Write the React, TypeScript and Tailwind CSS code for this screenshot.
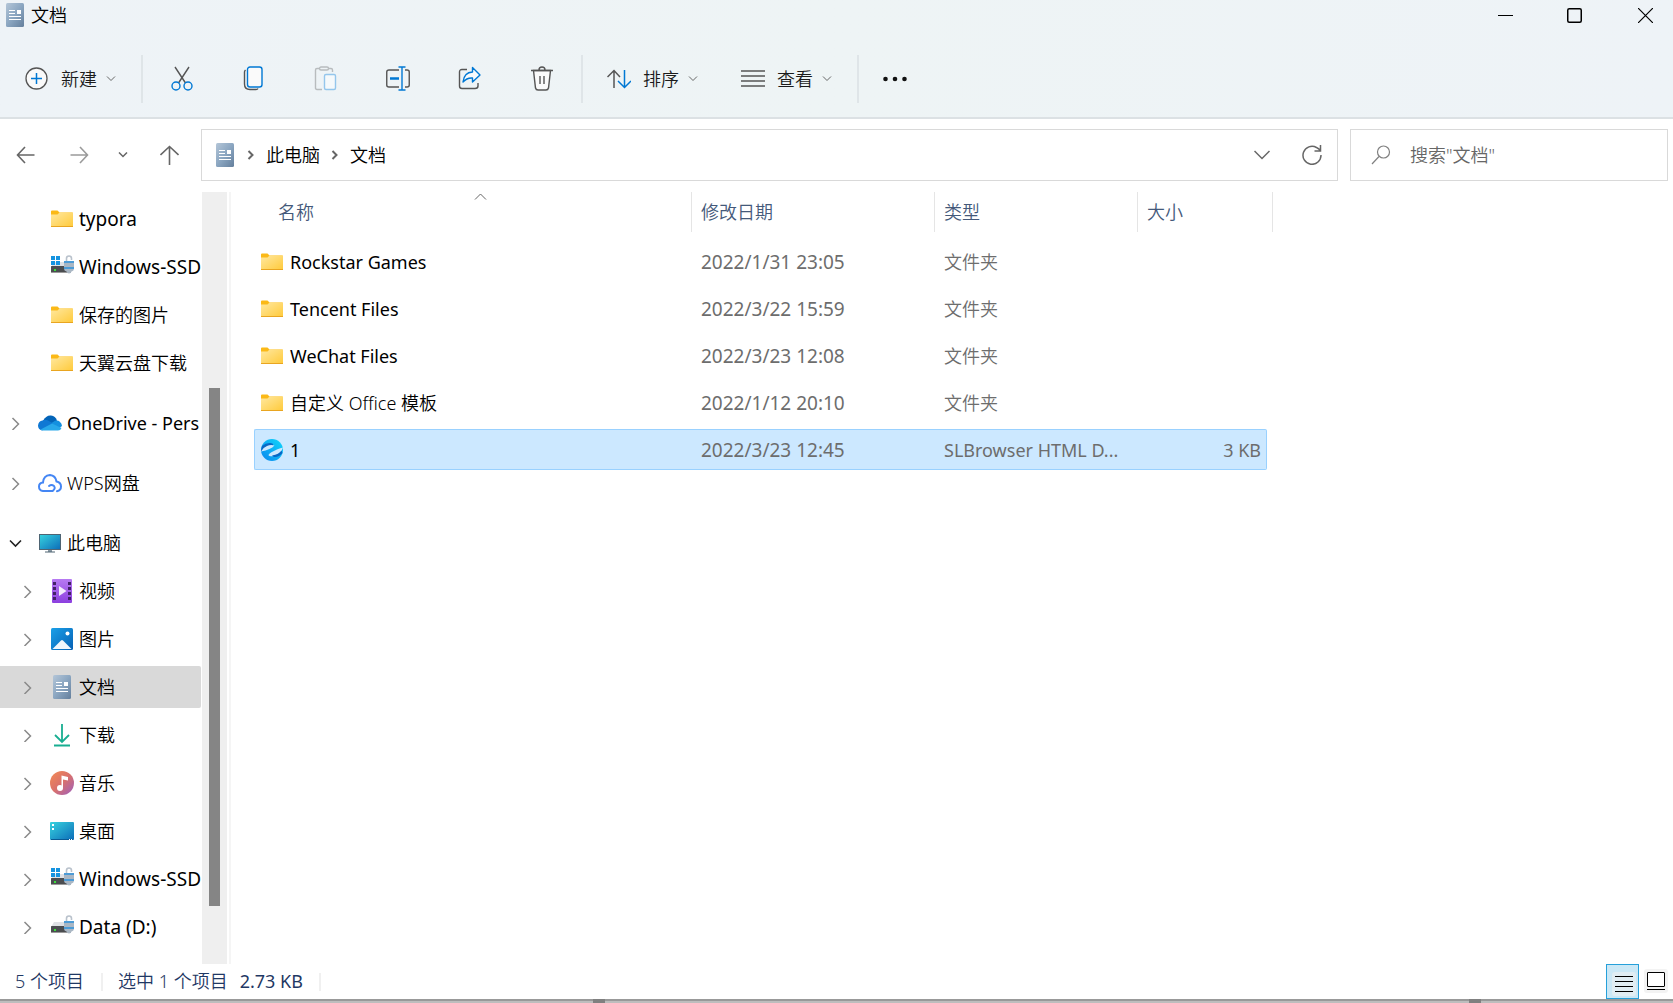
import type { ReactNode } from "react";

type NavItem = {
  label: string;
  icon: ReactNode;
  level: 1 | 2;
  expand?: "open" | "closed";
  active?: boolean;
  latin?: boolean;
};

type FileRow = {
  name: string;
  date: string;
  type: string;
  size?: string;
  icon: ReactNode;
  selected?: boolean;
};

const FolderIcon = () => (
  <svg width="22" height="18" viewBox="0 0 22 18">
    <defs>
      <linearGradient id="folder" x1="0" y1="0" x2="1" y2="1">
        <stop offset="0" stopColor="#ffe8a0" />
        <stop offset="1" stopColor="#ffca3a" />
      </linearGradient>
    </defs>
    <path d="M0 1.5Q0 .5 1 .5H6.5L8.5 2.5H21.5V6H0Z" fill="#fbb917" />
    <path d="M0 4.5H6.5L8.5 2.5H22V17H0Z" fill="url(#folder)" />
    <path d="M0 16.5H22" stroke="#e9a520" />
  </svg>
);

const DocumentIcon = () => (
  <svg width="18" height="24" viewBox="0 0 18 24">
    <defs>
      <linearGradient id="doc" x1="0" y1="0" x2="1" y2="1">
        <stop offset="0" stopColor="#b4c6d8" />
        <stop offset=".5" stopColor="#8ba6c1" />
        <stop offset="1" stopColor="#647f9c" />
      </linearGradient>
    </defs>
    <rect width="18" height="24" rx="1.5" fill="url(#doc)" />
    <path d="M3 7.5H9M3 10.5H9M3 13.5H15M3 16.5H15" stroke="#fff" />
    <rect x="11" y="7" width="4" height="4" fill="#fff" />
  </svg>
);

const DriveIcon = ({ windows = false }: { windows?: boolean }) => (
  <svg width="24" height="24" viewBox="0 0 24 24">
    <path d="M4 7H20L22 12H1Z" fill="#dfe1e5" />
    <rect x="1" y="11" width="20" height="7" rx=".5" fill="#4b4d50" />
    <path d="M1 17.5H21" stroke="#999" />
    <rect x="4" y="14" width="2" height="2" fill="#3be03b" />
    {windows && (
      <path d="M1 1H5V5H1ZM6 1H10V5H6ZM1 6H5V10H1ZM6 6H10V10H6Z" fill="#1593e0" />
    )}
    <path d="M16.5 7V3.5Q16.5 1 19 1Q21.5 1 21.5 3.5V5" fill="none" stroke="#b9c2cc" strokeWidth="1.6" />
    <path d="M14 6H24V13Q24 16 21.5 16.5Q21 18.5 19 18.5Q17 18.5 16.5 16.5Q14 16 14 13Z" fill="#aab7c4" />
    <path d="M14 7H24M14 13H24" stroke="#2e93dc" strokeWidth="1.5" />
  </svg>
);

const OneDriveIcon = () => (
  <svg width="24" height="16" viewBox="0 0 24 16">
    <path d="M5 6Q8 0 13 .5Q17.5 1 19 5.5L13 10Z" fill="#0364b8" />
    <path d="M4.5 5.5Q7 4 10 5.5L17 9.5L4 15.5Q0 14.5 0 10.5Q.5 6 4.5 5.5Z" fill="#0f78d4" />
    <path d="M13.5 8L17 5.8Q20 5 21.8 6.8Q24 8.5 24 11L20 14Z" fill="#1490df" />
    <path d="M2.5 14.5L14 8.5L23.5 13Q22.5 15.5 20 15.5H5Q3.5 15.5 2.5 14.5Z" fill="#28a8ea" />
  </svg>
);

const WpsIcon = () => (
  <svg width="24" height="19" viewBox="0 0 24 19" fill="none" stroke="#4486f4" strokeWidth="2" strokeLinecap="round">
    <path d="M14.5 17H5Q1 16.5 1 12.5Q1 9 5 8.5Q5.5 1.5 12 1Q17.5 1.5 18.5 7.5Q23 8.5 23 12.5Q23 16.5 19 17.3" />
    <path d="M11 12Q13.5 10 16 12Q18 14.5 14.5 17" />
  </svg>
);

const ComputerIcon = () => (
  <svg width="24" height="20" viewBox="0 0 24 20">
    <defs>
      <linearGradient id="pc" x1="0" y1="0" x2="1" y2="1">
        <stop offset="0" stopColor="#37d3df" />
        <stop offset="1" stopColor="#0c6cb8" />
      </linearGradient>
    </defs>
    <rect x="1.5" y="1.5" width="21" height="15" fill="url(#pc)" stroke="#4e6473" />
    <path d="M10 17H14V19H10Z" fill="#8595a1" />
    <path d="M7 19H17" stroke="#4e6473" />
  </svg>
);

const VideoIcon = () => (
  <svg width="20" height="24" viewBox="0 0 20 24">
    <defs>
      <linearGradient id="video" x1="0" y1="0" x2="0" y2="1">
        <stop offset="0" stopColor="#b77af2" />
        <stop offset="1" stopColor="#8c3fdf" />
      </linearGradient>
    </defs>
    <rect width="20" height="24" rx="1" fill="url(#video)" />
    <path d="M2.5 3V22M17.5 3V22" stroke="#432168" strokeWidth="3" strokeDasharray="3 2" />
    <path d="M7 7L14.5 12L7 17Z" fill="#f2ebfb" />
  </svg>
);

const PictureIcon = () => (
  <svg width="22" height="22" viewBox="0 0 22 22">
    <defs>
      <linearGradient id="picture" x1="0" y1="0" x2="1" y2="1">
        <stop offset="0" stopColor="#1ba0e8" />
        <stop offset="1" stopColor="#0560b4" />
      </linearGradient>
    </defs>
    <rect width="22" height="22" rx="1.5" fill="url(#picture)" />
    <path d="M1.5 21L10 12.5Q11 11.5 12 12.5L20.5 21Z" fill="#eff6fc" />
    <circle cx="16.5" cy="5.5" r="2" fill="#fff" />
  </svg>
);

const DownloadIcon = () => (
  <svg width="18" height="24" viewBox="0 0 18 24" fill="none" stroke="#18ae91" strokeWidth="1.8">
    <path d="M9 1V19M2 12L9 19L16 12M1 22.5H17" />
  </svg>
);

const MusicIcon = () => (
  <svg width="24" height="24" viewBox="0 0 24 24">
    <defs>
      <linearGradient id="music" x1="0" y1="0" x2="1" y2="1">
        <stop offset="0" stopColor="#f48b54" />
        <stop offset=".5" stopColor="#d9716c" />
        <stop offset="1" stopColor="#9c5fc0" />
      </linearGradient>
    </defs>
    <circle cx="12" cy="12" r="12" fill="url(#music)" />
    <path d="M11.5 4.5L18 6V9.5L13 8.5V17H11.5Z" fill="#fff" />
    <circle cx="10" cy="17" r="3" fill="#fff" />
  </svg>
);

const DesktopIcon = () => (
  <svg width="24" height="18" viewBox="0 0 24 18">
    <rect width="24" height="18" rx="1" fill="url(#pc)" />
    <path d="M2 3H4M2 7H4" stroke="#fff" strokeWidth="2" />
    <path d="M1 17.5H23" stroke="#0b5a94" />
    <path d="M19 17.5H20M21 17.5H22" stroke="#fff" />
  </svg>
);

const BrowserIcon = () => (
  <svg width="22" height="22" viewBox="0 0 22 22">
    <defs>
      <linearGradient id="browser" x1="1" y1="0" x2="0" y2="1">
        <stop offset="0" stopColor="#10d8fb" />
        <stop offset="1" stopColor="#0a86ee" />
      </linearGradient>
    </defs>
    <circle cx="11" cy="11" r="11" fill="url(#browser)" />
    <path d="M1 7Q5 3.5 9.5 4Q14 4.5 11 7.5Q8 10 0 12Z" fill="#0768c6" />
    <path d="M0 12.5Q2 8.5 6 7Q9.5 5.5 13.5 6.5Q10 10.5 0 12.5ZM22 8.5Q17 9.5 10 13.5Q6 16 8.5 17Q13 18 17.5 15Q21 12.5 22 8.5Z" fill="#cce8ff" />
    <path d="M11 16.5Q18 15.5 20.5 11.5L21.5 14Q18 18.5 13 18Z" fill="#0768c6" />
  </svg>
);

const Chevron = ({ className }: { className: string }) => (
  <svg width="10" height="6" viewBox="0 0 10 6" fill="none" stroke="currentColor" className={className}>
    <path d="M1 .5L5 4.5L9 .5" />
  </svg>
);

const Expander = ({ open }: { open: boolean }) =>
  open ? (
    <svg width="14" height="14" viewBox="0 0 14 14" fill="none" stroke="#222" strokeWidth="1.6">
      <path d="M1 4.5L6.5 10L12 4.5" />
    </svg>
  ) : (
    <svg width="14" height="14" viewBox="0 0 14 14" fill="none" stroke="#8a8a8a" strokeWidth="1.5">
      <path d="M3.5 2L9.5 8L3.5 14" />
    </svg>
  );

const Crumb = () => (
  <svg width="8" height="10" viewBox="0 0 8 10" fill="none" stroke="#666" strokeWidth="2">
    <path d="M1.5 1L5.5 5L1.5 9" />
  </svg>
);

const tools = [
  {
    label: "剪切",
    icon: (
      <>
        <path d="M5 1L15.5 17M19 1L8.5 17" stroke="#555" />
        <circle cx="6" cy="20" r="4" stroke="#0078d4" />
        <circle cx="18" cy="20" r="4" stroke="#0078d4" />
      </>
    ),
  },
  {
    label: "复制",
    icon: (
      <>
        <path d="M3.5 4Q2.5 5 2.5 6V18Q2.5 23.5 8 23.5H14Q15.5 23.5 16 22.5" stroke="#555" />
        <rect x="5.5" y="1" width="14.5" height="20" rx="2.5" fill="#fafafa" stroke="#0078d4" />
      </>
    ),
  },
  {
    label: "粘贴",
    disabled: true,
    icon: (
      <>
        <path d="M8 23.5H3Q1.5 23.5 1.5 22V4Q1.5 2.5 3 2.5H5M14 2.5H17Q18.5 2.5 18.5 4V6" stroke="#b8bcbe" />
        <rect x="5.5" y="1" width="9" height="3" rx="1.5" stroke="#b8bcbe" />
        <rect x="10.5" y="8.5" width="11" height="15" rx="1.5" fill="#f5f9fb" stroke="#94c6ec" />
      </>
    ),
  },
  {
    label: "重命名",
    icon: (
      <>
        <path d="M13 4H3Q.75 4 .75 6V19Q.75 21 3 21H13M19 4H21Q23.25 4 23.25 6V19Q23.25 21 21 21H19" stroke="#555" />
        <path d="M4 12.5H13" stroke="#0078d4" strokeWidth="2.5" />
        <path d="M12.5 1H19.5M12.5 24H19.5M16 1V24" stroke="#0078d4" />
      </>
    ),
  },
  {
    label: "共享",
    icon: (
      <>
        <path d="M9 3.5H4Q1.5 3.5 1.5 6V20Q1.5 22.5 4 22.5H17Q20 22.5 20 20V17" stroke="#555" />
        <path d="M14.5 1.5L22 9L14.5 16V12Q9 11.5 5 16Q6 6.5 14.5 6Z" fill="#f7fafc" stroke="#0078d4" strokeLinejoin="round" />
      </>
    ),
  },
  {
    label: "删除",
    icon: (
      <>
        <path d="M3.5 4.5L5.5 22Q6 24 8 24H16Q18 24 18.5 22L20.5 4.5Z" fill="#fafafa" stroke="#555" />
        <path d="M1 4.5H23M9 4Q9 1 12 1Q15 1 15 4M10 10V18M14 10V18" stroke="#555" />
      </>
    ),
  },
];

const quickAccess: NavItem[] = [
  { label: "typora", icon: <FolderIcon />, level: 2, latin: true },
  { label: "Windows-SSD", icon: <DriveIcon windows />, level: 2, latin: true },
  { label: "保存的图片", icon: <FolderIcon />, level: 2 },
  { label: "天翼云盘下载", icon: <FolderIcon />, level: 2 },
];

const computer: NavItem[] = [
  { label: "此电脑", icon: <ComputerIcon />, level: 1, expand: "open" },
  { label: "视频", icon: <VideoIcon />, level: 2, expand: "closed" },
  { label: "图片", icon: <PictureIcon />, level: 2, expand: "closed" },
  { label: "文档", icon: <DocumentIcon />, level: 2, expand: "closed", active: true },
  { label: "下载", icon: <DownloadIcon />, level: 2, expand: "closed" },
  { label: "音乐", icon: <MusicIcon />, level: 2, expand: "closed" },
  { label: "桌面", icon: <DesktopIcon />, level: 2, expand: "closed" },
  { label: "Windows-SSD", icon: <DriveIcon windows />, level: 2, expand: "closed", latin: true },
  { label: "Data (D:)", icon: <DriveIcon />, level: 2, expand: "closed", latin: true },
];

const navGroups: NavItem[][] = [
  quickAccess,
  [{ label: "OneDrive - Pers", icon: <OneDriveIcon />, level: 1, expand: "closed" }],
  [{ label: "WPS网盘", icon: <WpsIcon />, level: 1, expand: "closed" }],
  computer,
];

const files: FileRow[] = [
  { name: "Rockstar Games", date: "2022/1/31 23:05", type: "文件夹", icon: <FolderIcon /> },
  { name: "Tencent Files", date: "2022/3/22 15:59", type: "文件夹", icon: <FolderIcon /> },
  { name: "WeChat Files", date: "2022/3/23 12:08", type: "文件夹", icon: <FolderIcon /> },
  { name: "自定义 Office 模板", date: "2022/1/12 20:10", type: "文件夹", icon: <FolderIcon /> },
  { name: "1", date: "2022/3/23 12:45", type: "SLBrowser HTML D...", size: "3 KB", icon: <BrowserIcon />, selected: true },
];

// Latin text is set a step heavier than Chinese so both read evenly
const weightFor = (text: string) => (/[^\x20-\x7e]/.test(text) ? "font-[350]" : "font-normal");

const Divider = () => <div className="h-12 w-0.5 bg-[#dfe5e8]" />;

const TitleBar = () => (
  <div className="flex h-[30px] items-center justify-between pl-1.5">
    <div className="flex items-center gap-[7px] text-black">
      <DocumentIcon />
      <h1 className="font-[350]">文档</h1>
    </div>
    <div className="flex h-full">
      <button aria-label="最小化" className="flex w-[69px] items-center justify-center">
        <svg width="15" height="15" viewBox="0 0 15 15" stroke="#000"><path d="M0 7.5H15" /></svg>
      </button>
      <button aria-label="最大化" className="flex w-[69px] items-center justify-center">
        <svg width="15" height="15" viewBox="0 0 15 15" fill="none" stroke="#000" strokeWidth="1.5">
          <rect x=".75" y=".75" width="13.5" height="13.5" rx="1.5" />
        </svg>
      </button>
      <button aria-label="关闭" className="flex w-16 items-center justify-center pl-2">
        <svg width="15" height="15" viewBox="0 0 15 15" stroke="#000" strokeWidth="1.2"><path d="M0 0L15 15M15 0L0 15" /></svg>
      </button>
    </div>
  </div>
);

const Toolbar = () => (
  <div className="flex h-[87px] items-center pt-2.5 text-[#1b1b1b]">
    <button className="flex items-center pr-[25px] pl-[25px]">
      <svg width="23" height="23" viewBox="0 0 23 23" fill="none" strokeWidth="1.3">
        <circle cx="11.5" cy="11.5" r="10.5" fill="#fafafa" stroke="#555" />
        <path d="M6 11.5H17M11.5 6V17" stroke="#0078d4" strokeWidth="1.5" />
      </svg>
      <span className="mr-[9px] ml-[13px]">新建</span>
      <Chevron className="text-[#666]" />
    </button>
    <Divider />
    <div className="flex px-[3px]">
      {tools.map((tool) => (
        <button key={tool.label} aria-label={tool.label} disabled={tool.disabled} className="flex h-12 w-[72px] items-center justify-center">
          <svg width="24" height="25" viewBox="0 0 24 25" fill="none" strokeWidth="1.4">{tool.icon}</svg>
        </button>
      ))}
    </div>
    <Divider />
    <button className="flex items-center pl-6">
      <svg width="24" height="20" viewBox="0 0 24 20" fill="none" strokeWidth="1.5">
        <path d="M7 19V1.5M.5 8L7 1.5L13 8" stroke="#555" />
        <path d="M17.5 1V18.5M11 12L17.5 18.5L24 12" stroke="#0078d4" />
      </svg>
      <span className="mr-[9px] ml-3">排序</span>
      <Chevron className="text-[#666]" />
    </button>
    <button className="flex items-center pr-[25px] pl-[43px]">
      <svg width="24" height="17" viewBox="0 0 24 17" stroke="#555" strokeWidth="1.3">
        <path d="M0 1H24M0 6H24M0 11H24M0 16H24" />
      </svg>
      <span className="mr-[9px] ml-3">查看</span>
      <Chevron className="text-[#666]" />
    </button>
    <Divider />
    <button aria-label="更多" className="flex items-center pl-6">
      <svg width="24" height="6" viewBox="0 0 24 6" fill="#111">
        <circle cx="2.5" cy="3" r="2.3" />
        <circle cx="12" cy="3" r="2.3" />
        <circle cx="21.5" cy="3" r="2.3" />
      </svg>
    </button>
  </div>
);

const AddressBar = () => (
  <div className="flex h-[73px] items-center pr-[5px] pb-0.5">
    <nav className="flex w-[201px] items-center pl-4 text-[#666]">
      <button aria-label="后退">
        <svg width="19" height="18" viewBox="0 0 19 18" fill="none" stroke="currentColor" strokeWidth="1.6"><path d="M18.5 9H1.5M9 1L1.5 9L9 17" /></svg>
      </button>
      <button aria-label="前进" className="ml-[35px] text-[#9a9a9a]">
        <svg width="19" height="18" viewBox="0 0 19 18" fill="none" stroke="currentColor" strokeWidth="1.6"><path d="M.5 9H17.5M10 1L17.5 9L10 17" /></svg>
      </button>
      <button aria-label="最近位置" className="ml-[29px]"><Chevron className="stroke-[1.5]" /></button>
      <button aria-label="上移" className="ml-8">
        <svg width="19" height="20" viewBox="0 0 19 20" fill="none" stroke="currentColor" strokeWidth="1.6"><path d="M9.5 20V1.5M.5 10L9.5 1.5L18.5 10" /></svg>
      </button>
    </nav>
    <div className="flex h-[52px] flex-1 items-center border border-[#d9d9d9] pr-[15px] pl-3.5 text-black">
      <DocumentIcon />
      <div className="flex flex-1 items-center gap-[11px] pl-[13px]">
        <Crumb />
        <a href="#computer">此电脑</a>
        <Crumb />
        <a href="#documents">文档</a>
      </div>
      <button aria-label="历史记录" className="text-[#666]">
        <svg width="16" height="10" viewBox="0 0 16 10" fill="none" stroke="currentColor" strokeWidth="1.5"><path d="M.5 1L8 8.5L15.5 1" /></svg>
      </button>
      <button aria-label="刷新" className="ml-8">
        <svg width="20" height="20" viewBox="0 0 20 20" fill="none" stroke="#666" strokeWidth="1.5">
          <path d="M14.5 2.5A9 9 0 1 0 19 10M18.5 0V6H12.5M18.5 6Q17 3.5 14.5 2.5" />
        </svg>
      </button>
    </div>
    <label className="ml-3 flex h-[52px] w-[318px] items-center border border-[#d9d9d9] pl-5">
      <svg width="20" height="20" viewBox="0 0 20 20" fill="none" stroke="#808080" strokeWidth="1.2">
        <circle cx="12.5" cy="7" r="6" />
        <path d="M8 11.5L1 19" />
      </svg>
      <input aria-label="搜索" placeholder='搜索"文档"' className="ml-[19px] min-w-0 flex-1 outline-none placeholder:text-[#666]" />
    </label>
  </div>
);

const NavRow = ({ item }: { item: NavItem }) => (
  <a
    href="#nav"
    className={`flex h-[42px] items-center rounded-r-xs whitespace-nowrap text-black ${item.level === 1 ? "pl-[9px]" : "pl-[21px]"} ${item.active ? "bg-[#d9d9d9]" : ""} ${item.latin ? "text-[19px]" : ""} ${weightFor(item.label)}`}
  >
    <span className="mr-[15px] w-3.5 shrink-0">{item.expand && <Expander open={item.expand === "open"} />}</span>
    <span className="mr-[5px] flex w-6 shrink-0 justify-center">{item.icon}</span>
    {item.label}
  </a>
);

const Sidebar = () => (
  <aside className="flex w-[231px] shrink-0 border-r-2 border-[#f5f5f5]">
    <div className="flex w-[201px] flex-col gap-[18px] pt-1.5">
      {navGroups.map((group, i) => (
        <div key={i} className="flex flex-col gap-1.5">
          {group.map((item, j) => (
            <NavRow key={j} item={item} />
          ))}
        </div>
      ))}
    </div>
    <div className="ml-px w-[25px] bg-[#efefef] pt-[196px] pl-[7px]">
      <div className="h-[518px] w-[11px] bg-[#858585]" />
    </div>
  </aside>
);

const HeaderCell = ({ label, span = 1 }: { label: string; span?: number }) => (
  <th colSpan={span} className="p-0 text-left align-top font-[350]">
    <div className="flex h-10 items-center border-r border-[#e5e5e5] pl-[9px]">{label}</div>
  </th>
);

const FileList = () => (
  <main className="flex-1 overflow-hidden pl-[23px]">
    <table className="-mt-1.5 w-[1019px] table-fixed border-separate border-spacing-x-0 border-spacing-y-1.5">
      <colgroup>
        <col className="w-[438px]" />
        <col className="w-[243px]" />
        <col className="w-[203px]" />
        <col className="w-[129px]" />
        <col className="w-1.5" />
      </colgroup>
      <thead className="text-[#44597a]">
        <tr className="h-[43px]">
          <th className="relative p-0 text-left align-top font-[350]">
            <div className="flex h-10 items-center border-r border-[#e5e5e5] pl-6">名称</div>
            <svg width="14" height="7" viewBox="0 0 14 7" fill="none" stroke="#666" className="absolute top-px left-1/2">
              <path d="M2 6.5L7.5 1L13 6.5" />
            </svg>
          </th>
          <HeaderCell label="修改日期" />
          <HeaderCell label="类型" />
          <HeaderCell label="大小" span={2} />
        </tr>
      </thead>
      <tbody className="text-[#6d6d6d]">
        {files.map((file) => {
          const cell = file.selected ? "border-y border-[#99d1ff] bg-[#cce8ff]" : "";
          return (
            <tr key={file.name} className="h-[41px]">
              <td className={`p-0 ${cell} ${weightFor(file.name)} ${file.selected ? "rounded-l-xs border-l pl-1.5" : "pl-[7px]"}`}>
                <div className="flex items-center gap-[7px] text-black">
                  {file.icon}
                  {file.name}
                </div>
              </td>
              <td className={`p-0 pl-[9px] text-[19px] font-normal ${cell}`}>{file.date}</td>
              <td className={`p-0 pl-[9px] whitespace-nowrap ${cell} ${weightFor(file.type)}`}>{file.type}</td>
              <td className={`p-0 pr-[5px] text-right font-normal ${cell} ${file.selected ? "rounded-r-xs border-r" : ""}`}>{file.size}</td>
            </tr>
          );
        })}
      </tbody>
    </table>
  </main>
);

const StatusBar = () => (
  <footer className="flex h-[35px] items-center text-[#1f3864]">
    <span className="w-[101px] pb-0.5 pl-[15px]">5 个项目</span>
    <div className="h-[18px] w-0.5 bg-[#f0f0f0]" />
    <span className="pb-0.5 pl-[15px]">选中 1 个项目</span>
    <span className="pr-4 pb-0.5 pl-3 font-normal">2.73 KB</span>
    <div className="h-[18px] w-0.5 bg-[#f0f0f0]" />
    <div className="ml-auto flex h-full items-center pr-2">
      <button aria-label="详细信息" className="flex h-full w-[33px] items-center justify-center border border-[#26a0da] bg-[#cbe8f6] pt-1 pl-0.5">
        <svg width="24" height="24" viewBox="0 0 24 24">
          <rect width="24" height="24" rx="3" fill="#e1edf3" />
          <path d="M3 4.5H21M3 9.5H21M3 14.5H21M3 19.5H21" stroke="#000" />
        </svg>
      </button>
      <button aria-label="大图标" className="-mr-[3px] ml-[5px] pb-0.5">
        <svg width="24" height="24" viewBox="0 0 24 24" fill="none" stroke="#000">
          <rect width="24" height="24" rx="3" fill="#f3f3f3" stroke="none" />
          <rect x="3.5" y="3.5" width="17" height="14" rx=".5" fill="#fff" />
          <path d="M3 20.5H21" />
        </svg>
      </button>
    </div>
  </footer>
);

export default function App() {
  return (
    <div className="flex h-screen flex-col bg-white font-['Noto_Sans','Noto_Sans_CJK_SC',sans-serif] text-[18px] leading-6 font-[350]">
      <header className="border-b-2 border-[#dce1e4] bg-linear-to-r from-[#eef3f7] via-[#eef4f5] to-[#eef3f7]">
        <TitleBar />
        <Toolbar />
      </header>
      <AddressBar />
      <div className="flex min-h-0 flex-1">
        <Sidebar />
        <FileList />
      </div>
      <StatusBar />
      <div className="flex h-1 justify-between border-t-2 border-[#999] bg-[#bdbdbd] pr-48 pl-[593px]">
        <div className="-mt-0.5 h-1 w-3 bg-[#808080]" />
        <div className="-mt-0.5 h-1 w-3 bg-[#808080]" />
      </div>
    </div>
  );
}
